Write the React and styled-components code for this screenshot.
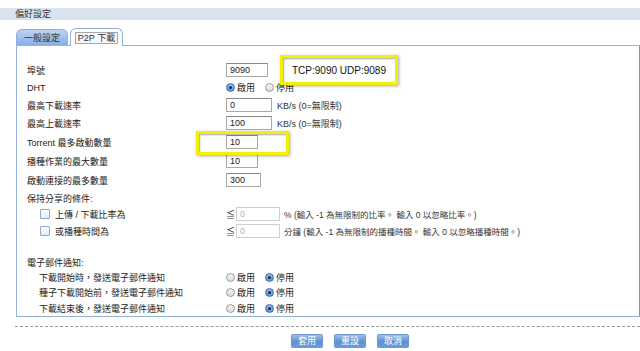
import React from 'react';
import styled, { createGlobalStyle } from 'styled-components';

const GlobalStyle = createGlobalStyle`
  body {
    margin: 0;
    background: #ffffff;
    font-family: "Liberation Sans", "Noto Sans CJK TC", sans-serif;
    font-size: 9px;
    color: #222222;
  }
`;

const Page = styled.div`
  padding-top: 8px;
  width: 640px;
  overflow: hidden;
`;

const HeaderBar = styled.div`
  height: 12px;
  line-height: 12px;
  background: #d9e4ee;
  padding-left: 15px;
  color: #333333;
  font-size: 9px;
`;

const TabStrip = styled.div`
  display: flex;
  align-items: flex-end;
  gap: 2px;
  height: 17px;
  margin-top: 8px;
  padding-left: 16px;
  position: relative;
  z-index: 2;
`;

const Tab = styled.div`
  box-sizing: border-box;
  width: ${(p) => (p.$active ? 53 : 52)}px;
  height: ${(p) => (p.$active ? 18 : 16)}px;
  margin-bottom: ${(p) => (p.$active ? -1 : 0)}px;
  border: 1px solid #8fb0da;
  border-bottom: none;
  border-radius: 6px 6px 0 0;
  background: ${(p) =>
    p.$active ? '#ffffff' : 'linear-gradient(#bcd4f3, #86afe6)'};
  display: flex;
  align-items: center;
  justify-content: center;
  color: #333333;
  font-size: 9px;
`;

const FocusLabel = styled.span`
  border: 1px solid #a8a8a8;
  background: #f4f6fa;
  padding: 0 2px;
  line-height: 10px;
`;

const Panel = styled.div`
  position: relative;
  margin-left: 16px;
  border: 1px solid #94b3dc;
  border-right-color: #7d93b8;
  padding: 15px 0 0 10px;
`;

const Row = styled.div`
  display: grid;
  grid-template-columns: ${(p) => 199 - (p.$indent || 0)}px 1fr;
  height: ${(p) => p.$h || 18}px;
  align-items: center;
  padding-left: ${(p) => p.$indent || 0}px;
`;

const Spacer = styled.div`
  height: ${(p) => p.$h}px;
`;

const Label = styled.div`
  display: flex;
  align-items: center;
  gap: 5px;
  white-space: nowrap;
`;

const Value = styled.div`
  display: flex;
  align-items: center;
  white-space: nowrap;
`;

const TextInput = styled.input`
  box-sizing: border-box;
  width: ${(p) => p.$w}px;
  height: 14px;
  border: 1px solid #a9a9a9;
  border-top-color: #8a8a8a;
  padding: 0 3px;
  margin: 0 ${(p) => p.$mr || 0}px 0 ${(p) => p.$ml || 0}px;
  font-family: inherit;
  font-size: 9px;
  color: #222222;
  background: #ffffff;
  outline: none;

  &:disabled {
    border-color: #cfcfcf;
    color: #b0b0b0;
  }
`;

const Radio = styled.span`
  box-sizing: border-box;
  width: 9px;
  height: 9px;
  border-radius: 50%;
  margin-right: 2px;
  display: inline-flex;
  align-items: center;
  justify-content: center;
  border: 1px solid ${(p) => (p.$on ? '#3f6fb5' : '#9a9a9a')};
  background: ${(p) =>
    p.$on
      ? 'radial-gradient(circle at 50% 35%, #a9cdf6, #3b7fd6)'
      : 'linear-gradient(#f4f4f4, #dcdcdc)'};

  &::after {
    content: '';
    width: 3px;
    height: 3px;
    border-radius: 50%;
    background: ${(p) => (p.$on ? '#12243f' : 'transparent')};
  }
`;

const RadioOption = styled.label`
  display: inline-flex;
  align-items: center;
  width: ${(p) => p.$w || 39}px;
`;

const CheckBox = styled.span`
  box-sizing: border-box;
  width: 10px;
  height: 10px;
  margin-left: 13px;
  border: 1px solid #8eaacd;
  border-radius: 1px;
  background: linear-gradient(#ffffff, #e2ebf6);
  display: inline-block;
`;

const LessEq = styled.span`
  width: 10px;
  color: #333333;
`;

const Note = styled.span`
  margin-left: ${(p) => p.$ml || 5}px;
  color: #333333;
  font-size: ${(p) => (p.$small ? 8.5 : 9)}px;
`;

const Highlight = styled.div`
  position: absolute;
  box-sizing: border-box;
  left: ${(p) => p.$x}px;
  top: ${(p) => p.$y}px;
  width: ${(p) => p.$w}px;
  height: ${(p) => p.$h}px;
  border: 3px solid #f3ef05;
  box-shadow: 1px 1px 3px rgba(0, 0, 0, 0.35), inset 1px 1px 2px rgba(0, 0, 0, 0.35);
  display: flex;
  align-items: center;
  padding-left: 9px;
  font-size: 10px;
  color: #111111;
  pointer-events: none;
`;

const Divider = styled.div`
  margin-top: 9px;
  border-top: 1px dashed #9a9a9a;
  margin-left: 15px;
`;

const ButtonRow = styled.div`
  display: flex;
  gap: 11px;
  margin-top: 7px;
  padding-left: 291px;
`;

const ActionButton = styled.button`
  box-sizing: border-box;
  width: 32px;
  height: 14px;
  padding: 0;
  border: 1px solid #6f98cc;
  border-radius: 2px;
  background: linear-gradient(#9fc0ea, #5d90d4 55%, #6d9cdb);
  color: #ffffff;
  font-family: inherit;
  font-size: 9px;
  line-height: 12px;
  box-shadow: 0 1px 1px rgba(0, 0, 0, 0.25);
`;

const RadioPair = ({ on }) => (
  <Value>
    <RadioOption>
      <Radio $on={on === 'enable'} />
      啟用
    </RadioOption>
    <RadioOption>
      <Radio $on={on === 'disable'} />
      停用
    </RadioOption>
  </Value>
);

export default function App() {
  return (
    <>
      <GlobalStyle />
      <Page>
        <HeaderBar>偏好設定</HeaderBar>
        <TabStrip>
          <Tab>一般設定</Tab>
          <Tab $active>
            <FocusLabel>P2P 下載</FocusLabel>
          </Tab>
        </TabStrip>
        <Panel>
          <Row $h={18}>
            <Label>埠號</Label>
            <Value>
              <TextInput $w={42} defaultValue="9090" />
            </Value>
          </Row>
          <Row $h={17}>
            <Label>DHT</Label>
            <RadioPair on="enable" />
          </Row>
          <Row $h={18}>
            <Label>最高下載速率</Label>
            <Value>
              <TextInput $w={46} defaultValue="0" />
              <Note>KB/s (0=無限制)</Note>
            </Value>
          </Row>
          <Row $h={18}>
            <Label>最高上載速率</Label>
            <Value>
              <TextInput $w={46} defaultValue="100" />
              <Note>KB/s (0=無限制)</Note>
            </Value>
          </Row>
          <Row $h={20}>
            <Label>Torrent 最多啟動數量</Label>
            <Value>
              <TextInput $w={32} defaultValue="10" />
            </Value>
          </Row>
          <Row $h={18}>
            <Label>播種作業的最大數量</Label>
            <Value>
              <TextInput $w={32} defaultValue="10" />
            </Value>
          </Row>
          <Row $h={20}>
            <Label>啟動連接的最多數量</Label>
            <Value>
              <TextInput $w={35} defaultValue="300" />
            </Value>
          </Row>
          <Row $h={16}>
            <Label>保持分享的條件:</Label>
          </Row>
          <Row $h={16}>
            <Label>
              <CheckBox />
              上傳 / 下載比率為
            </Label>
            <Value>
              <LessEq>≦</LessEq>
              <TextInput $w={44} defaultValue="0" disabled />
              <Note $ml={4} $small>% (輸入 -1 為無限制的比率。 輸入 0 以忽略比率。)</Note>
            </Value>
          </Row>
          <Row $h={18}>
            <Label>
              <CheckBox />
              或播種時間為
            </Label>
            <Value>
              <LessEq>≦</LessEq>
              <TextInput $w={44} defaultValue="0" disabled />
              <Note $ml={4} $small>分鐘 (輸入 -1 為無限制的播種時間。 輸入 0 以忽略播種時間。)</Note>
            </Value>
          </Row>
          <Spacer $h={14} />
          <Row $h={16}>
            <Label>電子郵件通知:</Label>
          </Row>
          <Row $h={14} $indent={12}>
            <Label>下載開始時，發送電子郵件通知</Label>
            <RadioPair on="disable" />
          </Row>
          <Row $h={16} $indent={12}>
            <Label>種子下載開始前，發送電子郵件通知</Label>
            <RadioPair on="disable" />
          </Row>
          <Row $h={16} $indent={12}>
            <Label>下載結束後，發送電子郵件通知</Label>
            <RadioPair on="disable" />
          </Row>

          <Highlight $x={263} $y={9} $w={118} $h={30}>
            TCP:9090 UDP:9089
          </Highlight>
          <Highlight $x={179} $y={85} $w={93} $h={24} />
        </Panel>
        <Divider />
        <ButtonRow>
          <ActionButton>套用</ActionButton>
          <ActionButton>重設</ActionButton>
          <ActionButton>取消</ActionButton>
        </ButtonRow>
      </Page>
    </>
  );
}
